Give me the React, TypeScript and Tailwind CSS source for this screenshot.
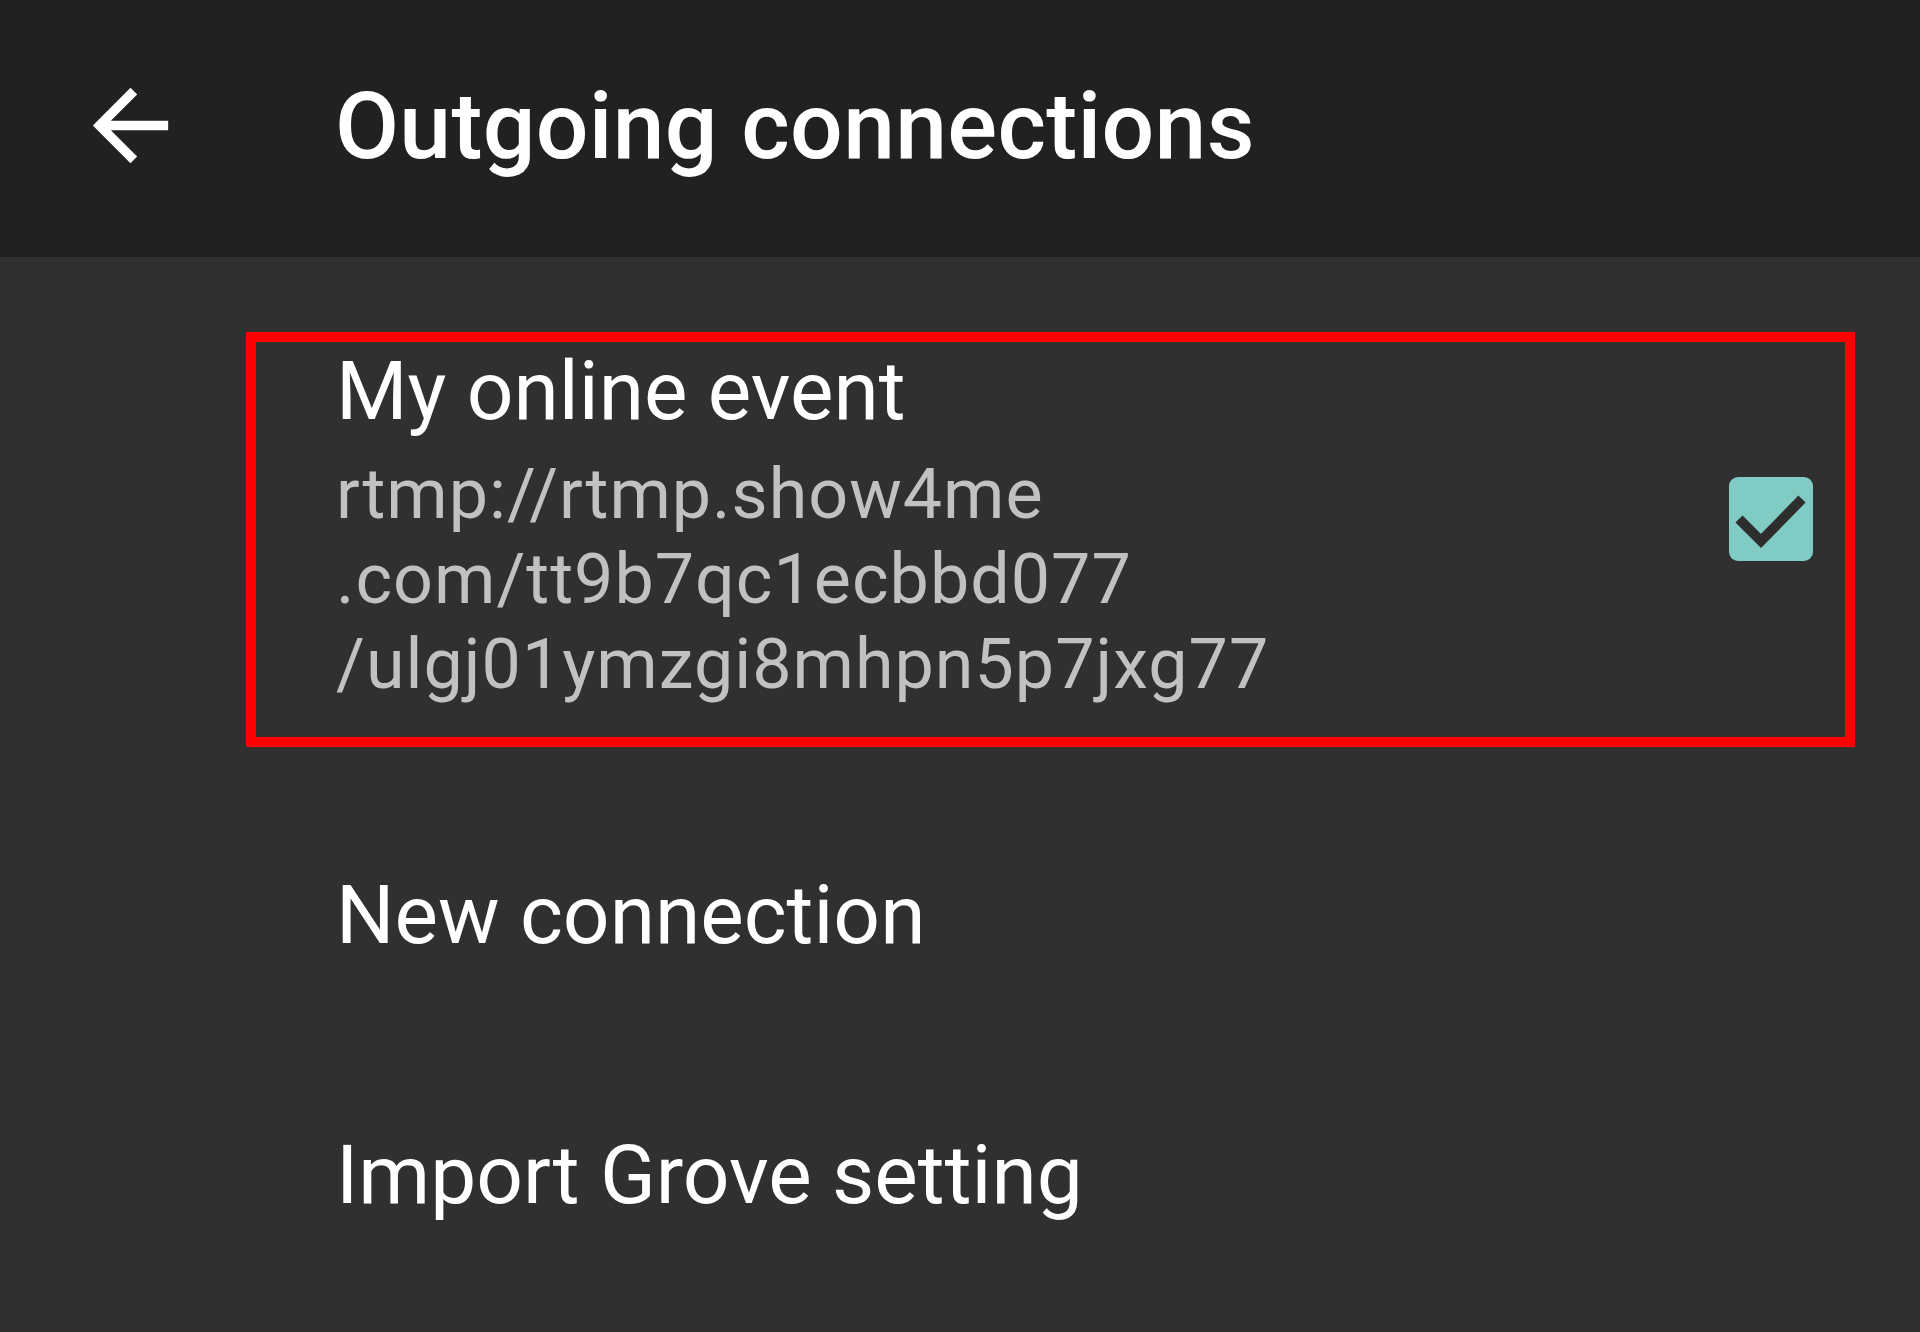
const ArrowBack = () => (
  <svg
    className="w-[113px] h-[113px] ml-[74px] mb-[6px] shrink-0"
    viewBox="0 0 24 24"
    fill="#ffffff"
    xmlns="http://www.w3.org/2000/svg"
  >
    <path d="M20 11H7.83l5.59-5.59L12 4l-8 8 8 8 1.41-1.41L7.83 13H20v-2z" />
  </svg>
);

const CheckBox = () => (
  <div className="w-[84px] h-[84px] rounded-[9px] bg-[#80cbc4] shrink-0 mt-[135px] mr-[32px]">
    <svg className="w-[84px] h-[84px]" viewBox="0 0 84 84">
      <polyline
        points="10,42 32,64 73,22"
        fill="none"
        stroke="#2d2d2d"
        strokeWidth={10}
      />
    </svg>
  </div>
);

export default function App() {
  const url = ["rtmp://rtmp.show4me", ".com/tt9b7qc1ecbbd077", "/ulgj01ymzgi8mhpn5p7jxg77"];

  return (
    <div
      className="min-h-screen w-full bg-[#303030] text-white"
      style={{ fontFamily: "Roboto, 'Noto Sans', sans-serif" }}
    >
      <header className="h-[257px] bg-[#212121] flex items-center">
        <ArrowBack />
        <h1 className="ml-[148px] text-[93px] leading-[108px] font-medium tracking-[0.3px] mt-[-3px]">
          Outgoing connections
        </h1>
      </header>

      <div className="pt-[75px]">
        <div className="ml-[246px] w-[1609px] border-[10px] border-[#ff0000] flex justify-between">
          <div className="pl-[80px] pb-[30px]">
            <div className="text-[82px] leading-[96px] pt-px">My online event</div>
            <div className="mt-[13px] text-[70px] leading-[85px] tracking-[1px] text-[#c1c1c1]">
              {url.map((line) => (
                <div key={line}>{line}</div>
              ))}
            </div>
          </div>
          <CheckBox />
        </div>

        <div className="pt-[38px]">
          <div className="h-[260px] flex items-center pl-[336px] text-[82px] leading-[96px]">
            New connection
          </div>
          <div className="h-[260px] flex items-center pl-[336px] text-[82px] leading-[96px]">
            Import Grove setting
          </div>
        </div>
      </div>
    </div>
  );
}
